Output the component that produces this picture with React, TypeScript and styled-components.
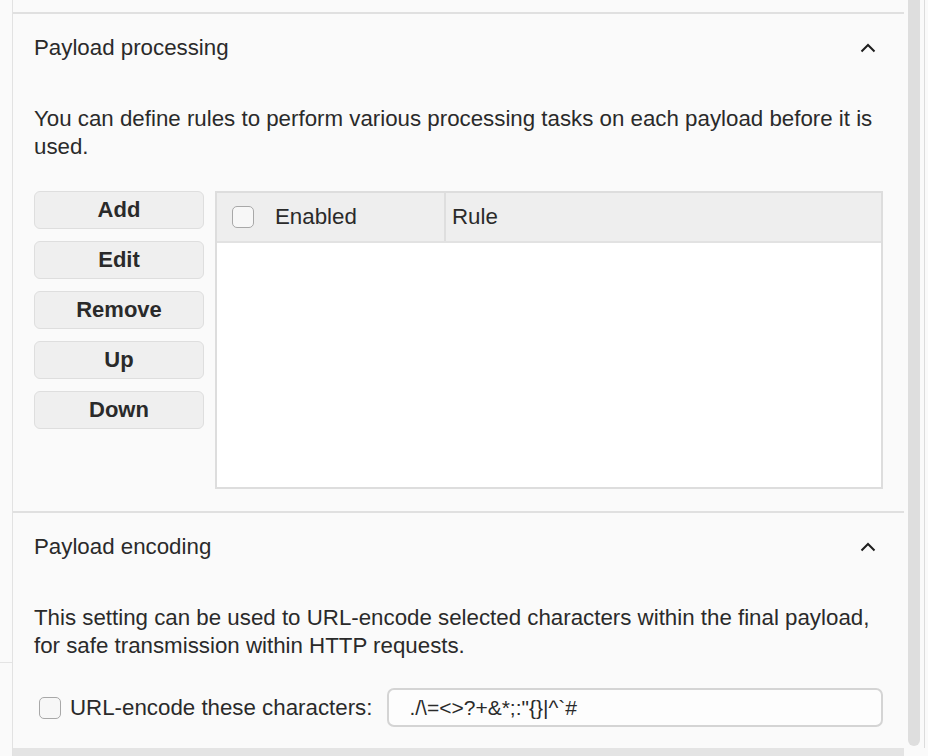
import React from "react";
import styled, { createGlobalStyle } from "styled-components";

const GlobalStyle = createGlobalStyle`
  html, body {
    margin: 0;
    padding: 0;
    background: #fafafa;
  }
  body {
    font-family: "Liberation Sans", Arial, sans-serif;
    color: #2a2a2a;
  }
`;

const Page = styled.div`
  display: flex;
  width: 928px;
  height: 756px;
  overflow: hidden;
  background: #fafafa;
`;
const LeftEdge = styled.div`
  width: 12px;
  flex: none;
  border-right: 1px solid #e2e2e2;
  display: flex;
  flex-direction: column;
`;
const EdgeTick = styled.div`
  height: 662px;
  border-bottom: 1px solid #e4e4e4;
`;
const Main = styled.div`
  width: 891px;
  flex: none;
  display: flex;
  flex-direction: column;
`;
const TopGap = styled.div`
  height: 12px;
  flex: none;
`;
const Section = styled.section`
  border-top: 2px solid #e0e0e0;
  display: flex;
  flex-direction: column;
  padding: 0 21px;
`;
const Header = styled.div`
  height: 68px;
  display: flex;
  align-items: center;
  justify-content: space-between;
  padding-right: 7px;
  font-size: 22.3px;
`;
const Description = styled.p`
  margin: 23px 0 0;
  font-size: 22.3px;
  line-height: 28px;
`;
const RulesArea = styled.div`
  display: flex;
  gap: 11px;
  margin-top: 30px;
  padding-bottom: 22px;
`;
const ButtonColumn = styled.div`
  display: flex;
  flex-direction: column;
  gap: 12px;
  width: 170px;
`;
const Button = styled.button`
  height: 38px;
  border: 1.5px solid #dedede;
  border-radius: 6px;
  background: #efefef;
  font-family: "Liberation Sans", Arial, sans-serif;
  font-weight: bold;
  font-size: 22px;
  color: #2a2a2a;
  padding: 0;
`;
const Table = styled.div`
  flex: 1;
  height: 298px;
  box-sizing: border-box;
  border: 2px solid #dddddd;
  background: #ffffff;
  display: flex;
  flex-direction: column;
`;
const TableHead = styled.div`
  height: 48px;
  background: #eeeeee;
  border-bottom: 2px solid #e2e2e2;
  display: grid;
  grid-template-columns: 229px 1fr;
  font-size: 22.3px;
`;
const HeadCell = styled.div<{ $first?: boolean }>`
  display: flex;
  align-items: center;
  gap: 21px;
  padding-left: ${(p) => (p.$first ? 15 : 6)}px;
  border-right: ${(p) => (p.$first ? "2px solid #dedede" : "none")};
`;
const Checkbox = styled.span`
  width: 22px;
  height: 22px;
  box-sizing: border-box;
  border: 1.5px solid #a8a8a8;
  border-radius: 5px;
  background: #f7f7f7;
  flex: none;
`;
const EncodeRow = styled.div`
  display: flex;
  align-items: center;
  margin-top: 28px;
  font-size: 22.3px;
`;
const EncodeLabel = styled.label`
  display: flex;
  align-items: center;
  gap: 9px;
  padding-left: 5px;
  margin-right: 15px;
`;
const CharsInput = styled.div`
  flex: 1;
  height: 39px;
  box-sizing: border-box;
  border: 2px solid #d4d4d4;
  border-radius: 7px;
  background: #fdfdfd;
  display: flex;
  align-items: center;
  padding-left: 20px;
  font-size: 21px;
`;
const BottomBand = styled.div`
  margin-top: auto;
  height: 8px;
  background: #e4e4e4;
`;
const ScrollGap = styled.div`
  width: 4px;
  flex: none;
`;
const ScrollTrack = styled.div`
  width: 12px;
  height: 746px;
  flex: none;
  background: #dedede;
  border-radius: 0 0 6px 6px;
`;
const RightEdge = styled.div`
  width: 4px;
  flex: none;
  border-right: 1px solid #dcdcdc;
  height: 748px;
`;

function Chevron() {
  return (
    <svg width="16" height="10" viewBox="0 0 16 10">
      <polyline
        points="1.5,8.5 8,2 14.5,8.5"
        fill="none"
        stroke="#1e1e1e"
        strokeWidth="2"
      />
    </svg>
  );
}

const ruleButtons = ["Add", "Edit", "Remove", "Up", "Down"];

export default function App() {
  return (
    <>
      <GlobalStyle />
      <Page>
        <LeftEdge>
          <EdgeTick />
        </LeftEdge>
        <Main>
          <TopGap />
          <Section>
            <Header>
              <span>Payload processing</span>
              <Chevron />
            </Header>
            <Description>
              You can define rules to perform various processing tasks on each
              payload before it is used.
            </Description>
            <RulesArea>
              <ButtonColumn>
                {ruleButtons.map((b) => (
                  <Button key={b}>{b}</Button>
                ))}
              </ButtonColumn>
              <Table>
                <TableHead>
                  <HeadCell $first>
                    <Checkbox />
                    Enabled
                  </HeadCell>
                  <HeadCell>Rule</HeadCell>
                </TableHead>
              </Table>
            </RulesArea>
          </Section>
          <Section>
            <Header>
              <span>Payload encoding</span>
              <Chevron />
            </Header>
            <Description>
              This setting can be used to URL-encode selected characters within
              the final payload, for safe transmission within HTTP requests.
            </Description>
            <EncodeRow>
              <EncodeLabel>
                <Checkbox />
                URL-encode these characters:
              </EncodeLabel>
              <CharsInput>{'./\\=<>?+&*;:"{}|^`#'}</CharsInput>
            </EncodeRow>
          </Section>
          <BottomBand />
        </Main>
        <ScrollGap />
        <ScrollTrack />
        <RightEdge />
      </Page>
    </>
  );
}
